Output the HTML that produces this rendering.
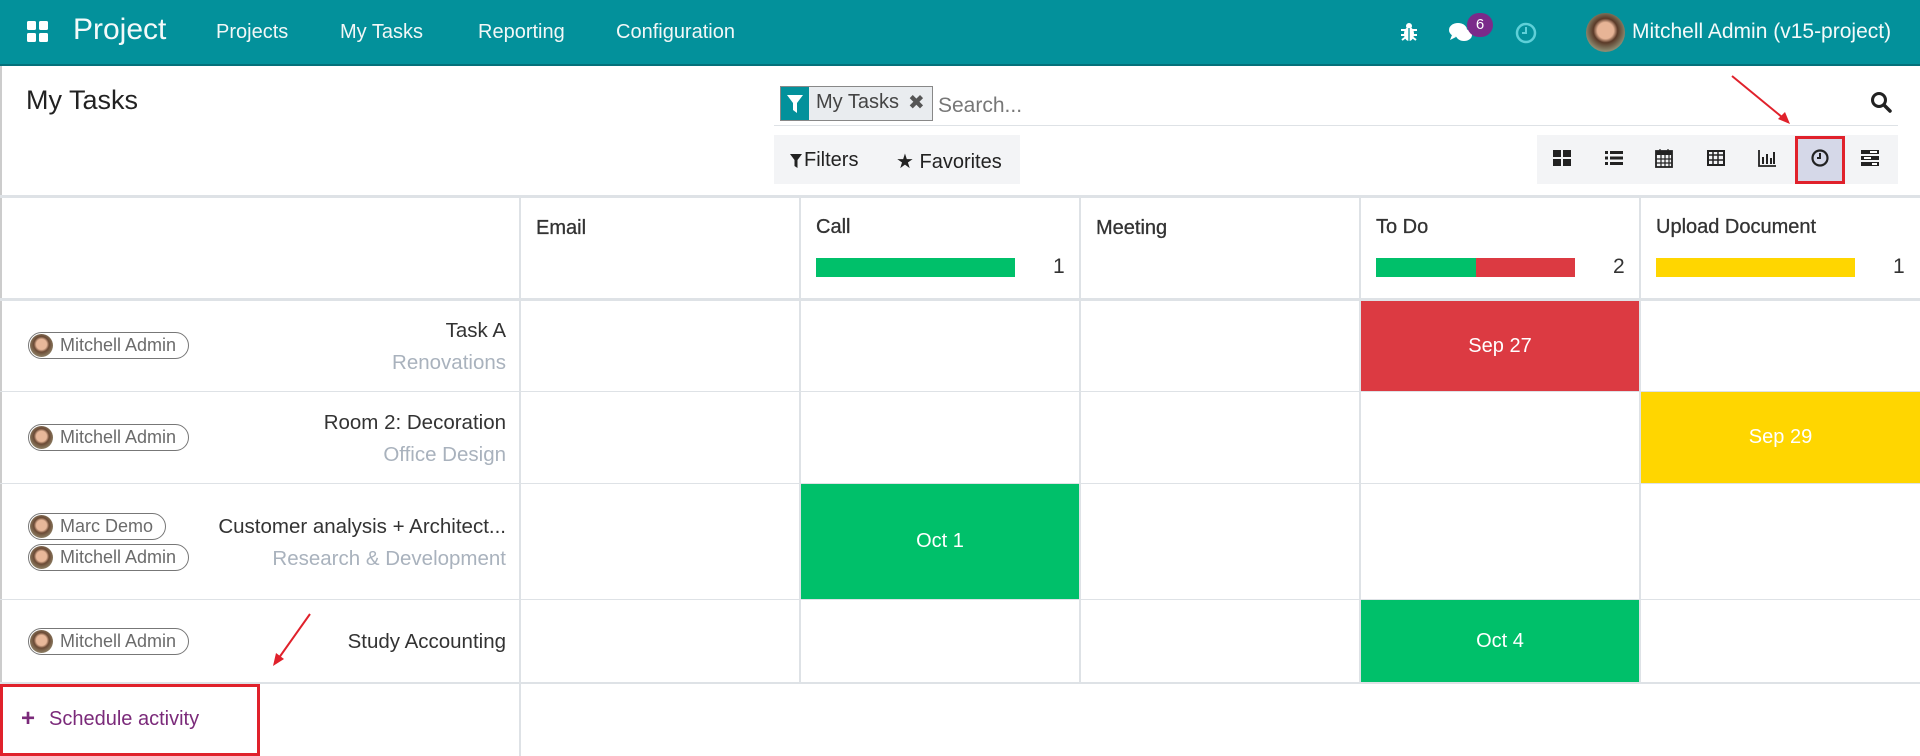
<!DOCTYPE html>
<html><head><meta charset="utf-8"><style>
*{box-sizing:border-box;margin:0;padding:0}
body{width:1920px;height:756px;overflow:hidden;background:#fff;font-family:"Liberation Sans",Arial,sans-serif;color:#4c4c4c;position:relative}
.abs{position:absolute}
.nav{left:0;top:0;width:1920px;height:66px;background:#03919b;border-bottom:2px solid #05707a;color:#fff}
.nav .m{position:absolute;top:21px;font-size:20px;color:#f2f7f7}
.gl{background:#dee2e6}
.hdr{font-size:20px;color:#333;top:217px;-webkit-text-stroke:0.3px #333}
.bar{top:258px;height:19px}
.cnt{top:255px;font-size:21px;color:#333}
.cell{color:#fff;font-size:20px;display:flex;align-items:center;justify-content:center}
.badge{height:27px;border:1px solid #777;border-radius:14px;font-size:18px;color:#6b6b6b;padding:0 12px 0 31px;line-height:25px}
.badge:before{content:"";position:absolute;left:1px;top:1px;width:23px;height:23px;border-radius:50%;background:radial-gradient(circle at 50% 45%,#e8b89a 0 30%,#6b4a35 45%,#8a7a60 70%)}
.tn{right:1414px;font-size:20.5px;color:#333;text-align:right;white-space:nowrap}
.pn{right:1414px;font-size:20.5px;color:#a9b2bd;text-align:right;white-space:nowrap}
.vi{top:148px;width:20px;height:20px}
</style></head><body>
<div class="abs nav">
  <svg class="abs" style="left:27px;top:21px" width="21" height="21" viewBox="0 0 21 21"><rect x="0" y="0" width="9" height="9" rx="1.5" fill="#fff"/><rect x="12" y="0" width="9" height="9" rx="1.5" fill="#fff"/><rect x="0" y="12" width="9" height="9" rx="1.5" fill="#fff"/><rect x="12" y="12" width="9" height="9" rx="1.5" fill="#fff"/></svg>
  <div class="abs" style="left:73px;top:13px;font-size:30px;color:#f4fafa">Project</div>
  <div class="m" style="left:216px">Projects</div>
  <div class="m" style="left:340px">My Tasks</div>
  <div class="m" style="left:478px">Reporting</div>
  <div class="m" style="left:616px">Configuration</div>
  <svg class="abs" style="left:1400px;top:22px" width="18" height="20" viewBox="0 0 18 20"><ellipse cx="9" cy="12" rx="5" ry="7" fill="#fff"/><circle cx="9" cy="4" r="3" fill="#fff"/><path d="M1 8h16M1 13h16M2 18l4-3M16 18l-4-3" stroke="#fff" stroke-width="2"/><line x1="9" y1="6" x2="9" y2="19" stroke="#03919b" stroke-width="1.3"/></svg>
  <svg class="abs" style="left:1448px;top:20px" width="28" height="24" viewBox="0 0 28 24"><ellipse cx="10" cy="10" rx="9" ry="7" fill="#fff"/><ellipse cx="16" cy="15" rx="8" ry="6" fill="#fff"/><path d="M4 15l-2 5 6-3z" fill="#fff"/></svg>
  <div class="abs" style="left:1467px;top:13px;width:26px;height:24px;border-radius:12px;background:#7b2a8a;color:#fff;font-size:15px;text-align:center;line-height:24px">6</div>
  <svg class="abs" style="left:1515px;top:22px" width="22" height="22" viewBox="0 0 22 22"><circle cx="11" cy="11" r="9" fill="none" stroke="#5fd0d8" stroke-width="2.5"/><path d="M11 5v6H7" fill="none" stroke="#5fd0d8" stroke-width="2"/></svg>
  <div class="abs" style="left:1586px;top:13px;width:39px;height:39px;border-radius:50%;background:radial-gradient(circle at 50% 45%,#e7b496 0 28%,#5a3a28 42%,#8c8a70 70%)"></div>
  <div class="abs" style="left:1632px;top:20px;font-size:21px;color:#f4fafa">Mitchell Admin (v15-project)</div>
</div>
<div class="abs" style="left:0;top:66px;width:2px;height:690px;background:#ccc"></div>
<div class="abs" style="left:26px;top:85px;font-size:27px;color:#222">My Tasks</div>
<div class="abs" style="left:780px;top:86px;width:153px;height:35px;border:1px solid #888;background:#e9ecef"></div>
<div class="abs" style="left:781px;top:87px;width:28px;height:33px;background:#03919b"></div>
<svg class="abs" style="left:787px;top:95px" width="16" height="18" viewBox="0 0 16 18"><path d="M0 0h16L10 8v10L6 15V8z" fill="#fff"/></svg>
<div class="abs" style="left:816px;top:91px;font-size:20px;color:#444">My Tasks</div>
<div class="abs" style="left:908px;top:90px;font-size:20px;color:#555">✖</div>
<div class="abs" style="left:938px;top:94px;font-size:21px;color:#777">Search...</div>
<div class="abs" style="left:774px;top:125px;width:1124px;height:1px;background:#dee2e6"></div>
<svg class="abs" style="left:1870px;top:91px" width="22" height="22" viewBox="0 0 22 22"><circle cx="9" cy="9" r="6.5" fill="none" stroke="#222" stroke-width="3"/><path d="M14 14l6 6" stroke="#222" stroke-width="3.5" stroke-linecap="round"/></svg>
<div class="abs" style="left:774px;top:135px;width:246px;height:49px;background:#f3f4f6"></div>
<svg class="abs" style="left:790px;top:154px" width="12" height="14" viewBox="0 0 12 14"><path d="M0 0h12L7.5 6v8L4.5 12V6z" fill="#222"/></svg>
<div class="abs" style="left:804px;top:149px;font-size:20px;color:#222">Filters</div>
<div class="abs" style="left:896px;top:149px;font-size:20px;color:#222">★ Favorites</div>
<div class="abs" style="left:1537px;top:135px;width:361px;height:49px;background:#f3f4f6"></div>
<div class="abs" style="left:1795px;top:136px;width:50px;height:48px;background:#d5d8e8;border:3px solid #e0212b"></div>
<svg class="abs vi" style="left:1552px" viewBox="0 0 20 20"><rect x="1" y="2" width="8" height="7" fill="#222"/><rect x="11" y="2" width="8" height="7" fill="#222"/><rect x="1" y="11" width="8" height="7" fill="#222"/><rect x="11" y="11" width="8" height="7" fill="#222"/></svg>
<svg class="abs vi" style="left:1604px" viewBox="0 0 20 20"><g fill="#222"><rect x="1" y="3" width="3" height="3"/><rect x="6" y="3" width="13" height="3"/><rect x="1" y="8.5" width="3" height="3"/><rect x="6" y="8.5" width="13" height="3"/><rect x="1" y="14" width="3" height="3"/><rect x="6" y="14" width="13" height="3"/></g></svg>
<svg class="abs vi" style="left:1654px" viewBox="0 0 20 20"><rect x="2" y="3" width="16" height="16" fill="none" stroke="#222" stroke-width="1.8"/><rect x="2" y="3" width="16" height="4" fill="#222"/><path d="M6 1v4M14 1v4M2 11h16M2 15h16M7 7v12M11 7v12M15 7v12" stroke="#222" stroke-width="1.2"/></svg>
<svg class="abs vi" style="left:1706px" viewBox="0 0 20 20"><rect x="2" y="3" width="16" height="14" fill="none" stroke="#222" stroke-width="2"/><path d="M2 7h16M2 12h16M7 3v14M12 3v14" stroke="#222" stroke-width="1.5"/></svg>
<svg class="abs vi" style="left:1757px" viewBox="0 0 20 20"><path d="M2 2v16h17" fill="none" stroke="#222" stroke-width="1.8"/><g fill="#222"><rect x="5" y="9" width="2" height="7"/><rect x="9" y="6" width="2" height="10"/><rect x="13" y="10" width="2" height="6"/><rect x="16" y="4" width="2" height="12"/></g></svg>
<svg class="abs vi" style="left:1810px" viewBox="0 0 20 20"><circle cx="10" cy="10" r="7.5" fill="none" stroke="#222" stroke-width="2.2"/><path d="M10 5v5H7" fill="none" stroke="#222" stroke-width="2"/></svg>
<svg class="abs vi" style="left:1860px" viewBox="0 0 20 20"><g fill="#222"><rect x="1" y="2" width="18" height="4"/><rect x="1" y="8" width="18" height="4"/><rect x="1" y="14" width="18" height="4"/></g><g fill="#fff"><rect x="10" y="3" width="7" height="2"/><rect x="4" y="9" width="7" height="2"/><rect x="12" y="15" width="5" height="2"/></g></svg>
<svg class="abs" style="left:1728px;top:72px" width="70" height="60"><path d="M4 4L60 50" stroke="#e0212b" stroke-width="2"/><path d="M62 52L50 47L57 40z" fill="#e0212b"/></svg>
<!-- grid -->
<div class="abs gl" style="left:0;top:195px;width:1920px;height:3px"></div>
<div class="abs gl" style="left:0;top:298px;width:1920px;height:3px"></div>
<div class="abs gl" style="left:0;top:391px;width:1920px;height:1px"></div>
<div class="abs gl" style="left:0;top:483px;width:1920px;height:1px"></div>
<div class="abs gl" style="left:0;top:599px;width:1920px;height:1px"></div>
<div class="abs gl" style="left:0;top:682px;width:1920px;height:2px"></div>
<div class="abs gl" style="left:519px;top:196px;width:2px;height:560px"></div>
<div class="abs gl" style="left:799px;top:196px;width:2px;height:487px"></div>
<div class="abs gl" style="left:1079px;top:196px;width:2px;height:487px"></div>
<div class="abs gl" style="left:1359px;top:196px;width:2px;height:487px"></div>
<div class="abs gl" style="left:1639px;top:196px;width:2px;height:487px"></div>
<div class="abs hdr" style="left:536px">Email</div>
<div class="abs hdr" style="left:816px;top:216px">Call</div>
<div class="abs hdr" style="left:1096px">Meeting</div>
<div class="abs hdr" style="left:1376px;top:216px">To Do</div>
<div class="abs hdr" style="left:1656px;top:216px">Upload Document</div>
<div class="abs bar" style="left:816px;width:199px;background:#00c06a"></div>
<div class="abs cnt" style="left:1053px">1</div>
<div class="abs bar" style="left:1376px;width:100px;background:#00c06a"></div>
<div class="abs bar" style="left:1476px;width:99px;background:#dc3a42"></div>
<div class="abs cnt" style="left:1613px">2</div>
<div class="abs bar" style="left:1656px;width:199px;background:#ffd600"></div>
<div class="abs cnt" style="left:1893px">1</div>
<div class="abs cell" style="left:1361px;top:301px;width:278px;height:90px;background:#dc3a42">Sep 27</div>
<div class="abs cell" style="left:1641px;top:392px;width:279px;height:91px;background:#ffd600">Sep 29</div>
<div class="abs cell" style="left:801px;top:484px;width:278px;height:115px;background:#00c06a">Oct 1</div>
<div class="abs cell" style="left:1361px;top:600px;width:278px;height:82px;background:#00c06a">Oct 4</div>
<!-- left -->
<div class="abs badge" style="left:28px;top:332px">Mitchell Admin</div>
<div class="abs tn" style="top:319px">Task A</div>
<div class="abs pn" style="top:351px">Renovations</div>
<div class="abs badge" style="left:28px;top:424px">Mitchell Admin</div>
<div class="abs tn" style="top:411px">Room 2: Decoration</div>
<div class="abs pn" style="top:443px">Office Design</div>
<div class="abs badge" style="left:28px;top:513px">Marc Demo</div>
<div class="abs badge" style="left:28px;top:544px">Mitchell Admin</div>
<div class="abs tn" style="top:515px">Customer analysis + Architect...</div>
<div class="abs pn" style="top:547px">Research &amp; Development</div>
<div class="abs badge" style="left:28px;top:628px">Mitchell Admin</div>
<div class="abs tn" style="top:630px">Study Accounting</div>
<svg class="abs" style="left:268px;top:610px" width="48" height="60"><path d="M42 4L8 52" stroke="#e0212b" stroke-width="2"/><path d="M5 56L8 43L16 49z" fill="#e0212b"/></svg>
<div class="abs" style="left:0;top:684px;width:260px;height:72px;border:3px solid #e0212b"></div>
<div class="abs" style="left:21px;top:705px;font-size:24px;font-weight:bold;color:#7b2a7a">+</div>
<div class="abs" style="left:49px;top:708px;font-size:20px;color:#7b2a7a">Schedule activity</div>
</body></html>
